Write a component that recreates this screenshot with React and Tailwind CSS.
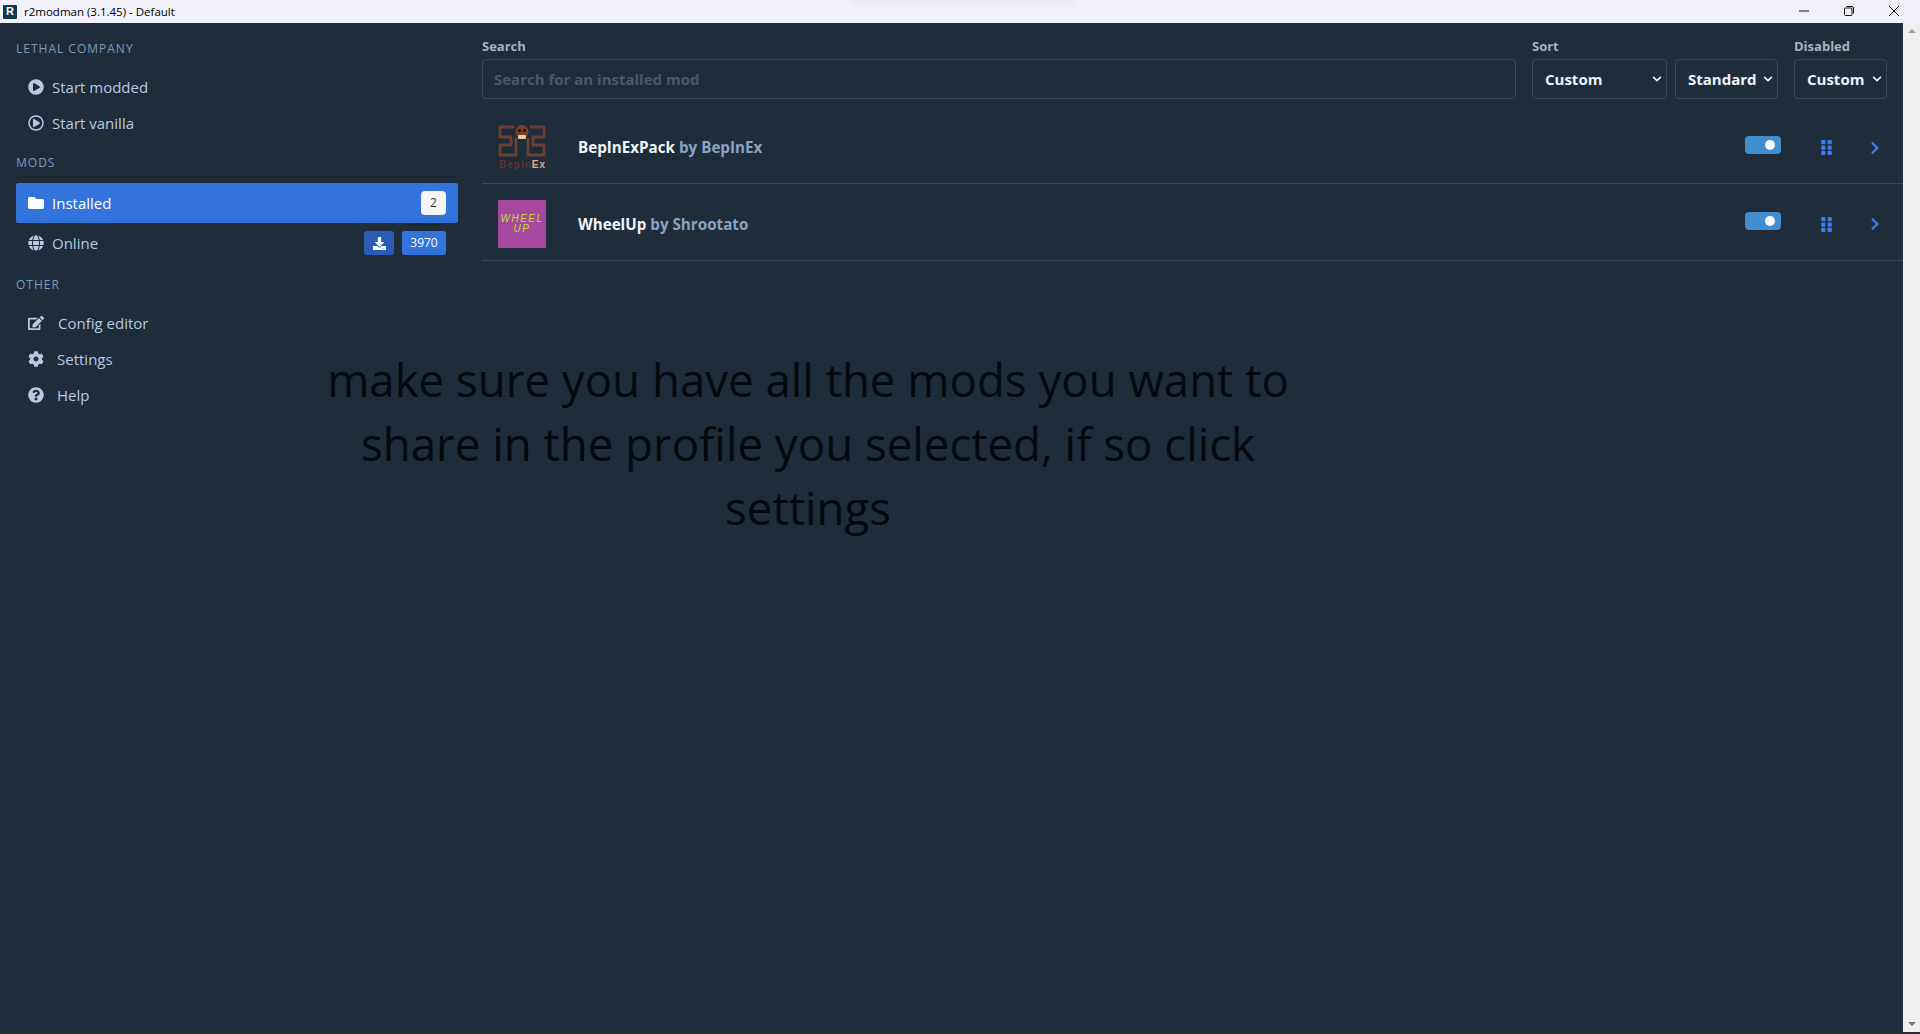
import React from "react";
import { FaPlayCircle, FaRegPlayCircle, FaFolder, FaGlobe, FaDownload, FaEdit, FaCog, FaQuestionCircle, FaChevronRight, FaGripVertical, FaChevronDown } from "react-icons/fa";

const SANS = "font-['Open_Sans','Noto_Sans',sans-serif]";

function SectionLabel({ children, className = "" }) {
  return <div className={`pl-4 text-[12px] leading-4 tracking-[1px] text-[#7b9bbd] ${className}`}>{children}</div>;
}

function NavItem({ icon, label, gap = "ml-2", className = "" }) {
  return (
    <div className={`flex h-9 items-center pl-7 text-[15px] text-[#b5cbe3] ${className}`}>
      <span className="flex w-4 justify-center text-[16px]">{icon}</span>
      <span className={gap}>{label}</span>
    </div>
  );
}

function Field({ label, value, className, textClass = "pl-3" }) {
  return (
    <div className={`flex flex-col ${className}`}>
      <div className="h-[13px] text-[13px] font-bold leading-[13px] text-[#a7b2bf]">{label || "\u00a0"}</div>
      <div className="mt-[6px] flex h-10 items-center justify-between rounded border border-[#3b4956] pr-[4px]">
        <span className={`text-[15px] font-bold text-[#eef4fa] ${textClass}`}>{value}</span>
        <FaChevronDown className="text-[10px] text-[#eef4fa]" />
      </div>
    </div>
  );
}

function BepLogo() {
  return (
    <svg width="48" height="48" viewBox="0 0 48 48" className="shrink-0">
      <g fill="none" stroke="#6b4032" strokeWidth="2.8" strokeLinejoin="round">
        <path d="M16 3 H2 V13 H13 V21 H2 V31 H18 V14" />
        <path d="M32 3 H46 V13 H35 V21 H46 V31 H30 V14" />
      </g>
      <ellipse cx="24" cy="8" rx="6.5" ry="7" fill="#7a3d26" />
      <circle cx="21.5" cy="6.5" r="1.4" fill="#111" />
      <circle cx="26.5" cy="6.5" r="1.4" fill="#111" />
      <rect x="20" y="11" width="8" height="4" rx="1" fill="#e6c9a0" />
      <text x="1" y="44" fontSize="10" fontWeight="700" fontFamily="'Liberation Sans',sans-serif" letterSpacing="1" fill="#5b3a2e">
        BepIn<tspan fill="#e2a98f">Ex</tspan>
      </text>
    </svg>
  );
}

function WheelLogo() {
  return (
    <div className="flex h-12 w-12 shrink-0 flex-col items-center justify-center bg-[#a6489f] font-['Liberation_Sans',sans-serif] text-[10px] italic leading-[10px] tracking-[1.5px] text-[#bde02a]">
      <span>WHEEL</span>
      <span>UP</span>
    </div>
  );
}

function ModRow({ logo, name, author, rowClass }) {
  return (
    <div className={`flex items-center border-b border-[#3a4753] ${rowClass}`}>
      <div className="ml-4">{logo}</div>
      <div className="ml-8 text-[15.2px] font-bold text-[#eef4fa]">
        {name} <span className="text-[#88a4c4]">by {author}</span>
      </div>
      <div className="ml-auto flex items-center">
        <div className="relative -mt-[6px] h-[18px] w-9 rounded-[4px] bg-[#3e8ed0]">
          <div className="absolute right-[6px] top-[4px] h-[10px] w-[10px] rounded-full bg-white" />
        </div>
        <FaGripVertical className="ml-[37px] text-[17px] text-[#3f7cf0]" />
        <FaChevronRight className="ml-[33px] mr-[21px] text-[14px] text-[#3f7cf0]" />
      </div>
    </div>
  );
}

export default function App() {
  return (
    <div className={`relative flex h-[1034px] w-full flex-col overflow-hidden bg-[#2b2b2b] ${SANS}`}>
      <header className="flex h-[23px] shrink-0 items-center bg-[#f2f0f8] text-black">
        <div className="ml-[3px] flex h-[14px] w-[14px] items-center justify-center rounded-[1px] bg-[#12384f] font-['Liberation_Sans',sans-serif] text-[11px] font-bold leading-none text-white">R</div>
        <span className="ml-[7px] text-[11.5px]">r2modman (3.1.45) - Default</span>
        <div className="mb-[2px] ml-auto flex items-center">
          <svg width="12" height="12" viewBox="0 0 12 12"><path d="M1 6h10" stroke="#111" strokeWidth="1" /></svg>
          <svg width="12" height="12" viewBox="0 0 12 12" className="ml-[33px]" fill="none" stroke="#111"><rect x="1.5" y="3" width="7.5" height="7.5" rx="1" /><path d="M3.5 1.5h5.5a1.5 1.5 0 0 1 1.5 1.5v5.5" /></svg>
          <svg width="12" height="12" viewBox="0 0 12 12" className="ml-[33px] mr-[20px]" stroke="#111"><path d="M1 1l10 10M11 1L1 11" /></svg>
        </div>
      </header>

      <div className="flex h-[1009px] shrink-0">
        <aside className="w-[482px] shrink-0 bg-[#1f2c3a] pt-[18px]">
          <SectionLabel>LETHAL COMPANY</SectionLabel>
          <NavItem className="mt-[12px]" icon={<FaPlayCircle />} label="Start modded" />
          <NavItem icon={<FaRegPlayCircle />} label="Start vanilla" />
          <SectionLabel className="mt-[14px]">MODS</SectionLabel>
          <div className="ml-4 mr-6 mt-[12px] flex h-10 items-center rounded-[2px] bg-[#3273dc] pl-3 pr-3 text-[15px] text-white">
            <FaFolder className="text-[16px]" />
            <span className="ml-2">Installed</span>
            <span className="ml-auto flex h-6 w-[25px] items-center justify-center rounded bg-[#f5f5f5] text-[12px] text-[#363636]">2</span>
          </div>
          <div className="ml-4 mr-6 flex h-10 items-center pl-3 pr-3 text-[15px] text-[#b5cbe3]">
            <FaGlobe className="text-[16px]" />
            <span className="ml-2">Online</span>
            <span className="ml-auto flex h-6 w-[30px] items-center justify-center rounded-[3px] bg-[#2a5cb5] text-[13px] text-white"><FaDownload /></span>
            <span className="ml-2 flex h-6 w-11 items-center justify-center rounded-[3px] bg-[#3273dc] text-[12px] text-white">3970</span>
          </div>
          <SectionLabel className="mt-[14px]">OTHER</SectionLabel>
          <NavItem className="mt-[12px]" icon={<FaEdit />} label="Config editor" gap="ml-[14px]" />
          <NavItem icon={<FaCog />} label="Settings" gap="ml-[13px]" />
          <NavItem icon={<FaQuestionCircle />} label="Help" gap="ml-[13px]" />
        </aside>

        <main className="min-w-0 flex-1 bg-[#1f2c3a] pt-[17px]">
          <div className="flex pr-4">
            <Field label="Search" textClass="pl-[11px]" value={<span className="font-bold text-[#4a5967]">Search for an installed mod</span>} className="w-[1034px] [&_svg]:hidden" />
            <Field label="Sort" value="Custom" className="ml-4 w-[135px]" />
            <Field label="" value="Standard" className="ml-2 w-[103px]" />
            <Field label="Disabled" value="Custom" className="ml-4 w-[93px]" />
          </div>
          <ModRow rowClass="mt-[1px] h-[84px] pt-[12px]" logo={<BepLogo />} name="BepInExPack" author="BepInEx" />
          <ModRow rowClass="h-[77px] pt-[4px]" logo={<WheelLogo />} name="WheelUp" author="Shrootato" />
        </main>

        <div className="flex w-[17px] shrink-0 flex-col items-center justify-between bg-[#f0f0f0] py-[6px]">
          <div className="h-0 w-0 border-x-[4px] border-b-[4px] border-x-transparent border-b-[#a3a3a3]" />
          <div className="h-0 w-0 border-x-[4px] border-t-[4px] border-x-transparent border-t-[#7a7a7a]" />
        </div>
      </div>

      <div className="absolute left-[308px] top-[347px] w-[1000px] text-center text-[45.6px] leading-[64px] text-[#05080c]">
        make sure you have all the mods you want to share in the profile you selected, if so click settings
      </div>
      <div className="absolute left-[850px] top-0 h-[3px] w-[225px] rounded-b bg-[#e6e4ec] blur-[2px]" />
    </div>
  );
}
